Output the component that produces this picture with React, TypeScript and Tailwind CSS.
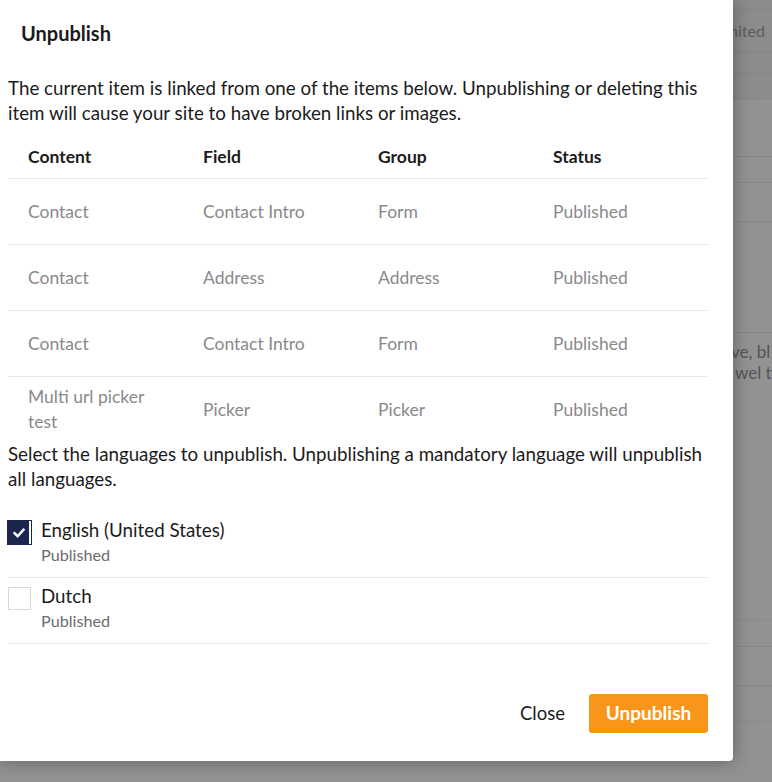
import React from "react";

const rows = [
  { content: "Contact", field: "Contact Intro", group: "Form", status: "Published" },
  { content: "Contact", field: "Address", group: "Address", status: "Published" },
  { content: "Contact", field: "Contact Intro", group: "Form", status: "Published" },
  { content: "Multi url picker test", field: "Picker", group: "Picker", status: "Published" },
];

function Check() {
  return (
    <svg width="14" height="14" viewBox="0 0 14 14" fill="none">
      <path d="M2.5 7.2 L5.6 10.2 L11.5 3.8" stroke="white" strokeWidth="2.4" strokeLinecap="square" />
    </svg>
  );
}

export default function App() {
  return (
    <div
      className="relative w-[772px] h-[782px] overflow-hidden bg-[#929292]"
      style={{ fontFamily: "Lato, 'Open Sans', sans-serif" }}
    >
      {/* dimmed page behind */}
      <div className="flex flex-col text-[16px] text-[#4f4f4f]">
        <div className="h-[100px] bg-[#8c8c8c] flex flex-col">
          <div className="h-[10px] border-b border-[#858585]" />
          <div className="h-[42px] border-b border-[#858585] flex items-center pl-[729px] whitespace-nowrap text-[#5c5c5c]">
            nited
          </div>
          <div className="h-[22px] border-b border-[#868686]" />
        </div>
        <div className="h-[57px] border-b border-[#878787]" />
        <div className="h-[26px] border-b border-[#878787]" />
        <div className="h-[39px] border-b border-[#878787]" />
        <div className="h-[111px] border-b border-[#878787]" />
        <div className="flex flex-col pl-[731px] whitespace-nowrap leading-[21px] pt-[8px] h-[261px] text-[#555555] text-[17px]">
          <span>ve, bl</span>
          <span className="pl-[4px]">wel t</span>
        </div>
        <div className="h-[26px] border-b border-[#8a8a8a]" />
        <div className="h-[27px] border-b border-[#878787]" />
        <div className="h-[39px] border-b border-[#878787]" />
        <div className="h-[36px] border-b border-[#8a8a8a]" />
      </div>

      {/* dialog */}
      <div className="absolute left-0 top-0 w-[733px] h-[761px] bg-white rounded-br-[4px] shadow-[0_0_18px_rgba(0,0,0,0.35)] flex flex-col text-[#1b1b1b]">
        <div className="h-[66px] flex items-center px-[21px] text-[20px] font-bold">Unpublish</div>

        <div className="flex flex-col pl-[8px] pr-[25px]">
          <p className="pt-[9px] text-[18.75px] leading-[25px]">
            The current item is linked from one of the items below. Unpublishing or deleting this item will cause your
            site to have broken links or images.
          </p>

          <div className="mt-[11px] flex flex-col">
            <div className="grid grid-cols-4 h-[43px] items-center border-b border-[#e9e9eb] text-[17.5px] font-bold">
              <div className="pl-[20px]">Content</div>
              <div className="pl-[20px]">Field</div>
              <div className="pl-[20px]">Group</div>
              <div className="pl-[20px]">Status</div>
            </div>
            {rows.map((r, i) => (
              <div
                key={i}
                className={
                  i < 3
                    ? "grid grid-cols-4 h-[66px] items-center border-b border-[#e9e9eb] text-[17.5px] leading-[25px] text-[#89898c]"
                    : "grid grid-cols-4 h-[64px] items-center text-[17.5px] leading-[25px] text-[#89898c]"
                }
              >
                <div className="pl-[20px] pr-[20px]">{r.content}</div>
                <div className="pl-[20px] pr-[20px]">{r.field}</div>
                <div className="pl-[20px] pr-[20px]">{r.group}</div>
                <div className="pl-[20px] pr-[20px]">{r.status}</div>
              </div>
            ))}
          </div>

          <p className="text-[18.75px] leading-[25px]">
            Select the languages to unpublish. Unpublishing a mandatory language will unpublish all languages.
          </p>

          <div className="mt-[21px] flex flex-col">
            <div className="flex pt-[5px] pb-[10px] border-b border-[#e9e9eb]">
              <div className="mt-[4px] w-[23px] h-[23px] bg-[#1b264f] flex items-center justify-center border-r-2 border-white outline outline-1 outline-[#1b264f]">
                <Check />
              </div>
              <div className="ml-[10px] flex flex-col">
                <span className="text-[18.75px] leading-[25px]">English (United States)</span>
                <span className="text-[16.2px] leading-[25px] text-[#6b6b6e]">Published</span>
              </div>
            </div>
            <div className="flex pt-[5px] pb-[10px] border-b border-[#e9e9eb]">
              <div className="mt-[4px] w-[23px] h-[23px] bg-white border border-[#d8d7d9]" />
              <div className="ml-[10px] flex flex-col">
                <span className="text-[18.75px] leading-[25px]">Dutch</span>
                <span className="text-[16.2px] leading-[25px] text-[#6b6b6e]">Published</span>
              </div>
            </div>
          </div>
        </div>

        <div className="mt-auto flex justify-end items-center pr-[25px] pb-[28px] gap-[12px]">
          <button className="h-[39px] px-[12px] text-[18.5px] text-[#1b1b1b]">Close</button>
          <button className="h-[39px] w-[119px] rounded-[3px] bg-[#f8961b] text-white text-[19px] font-bold">
            Unpublish
          </button>
        </div>
      </div>
    </div>
  );
}
